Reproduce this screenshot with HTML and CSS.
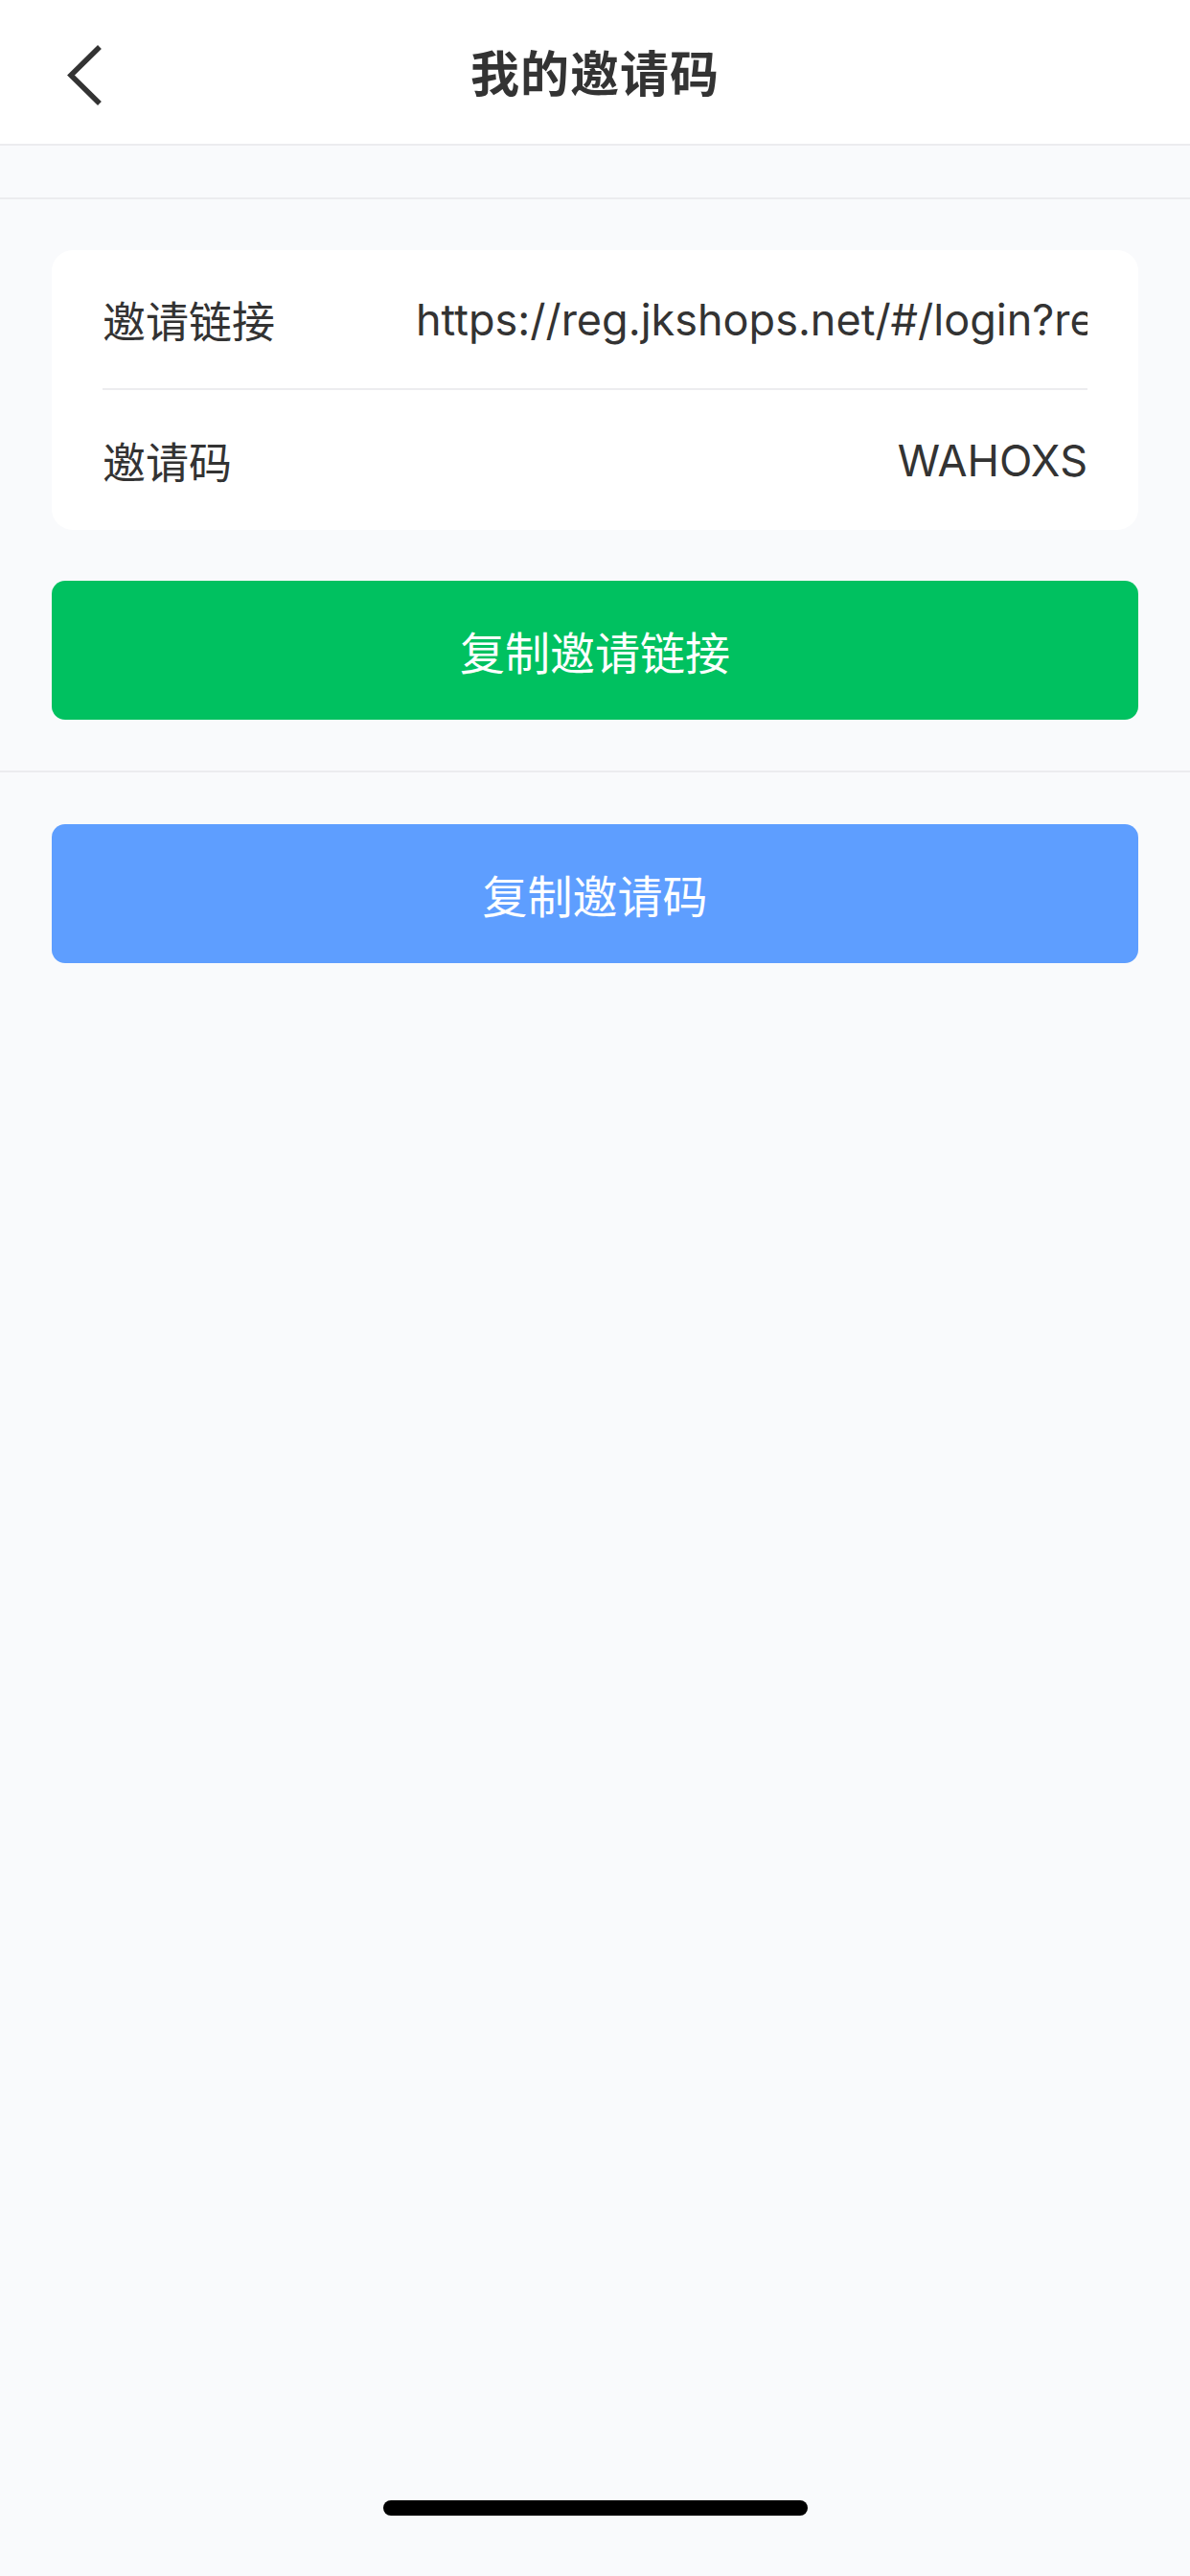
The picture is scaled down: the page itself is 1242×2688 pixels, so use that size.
FILE: index.html
```html
<!DOCTYPE html>
<html lang="zh-CN">
<head>
<meta charset="utf-8">
<title>我的邀请码</title>
<link rel="stylesheet" href="styles.css">
</head>
<body>
<div class="page">
  <header class="navbar">
    <svg class="back" width="60" height="80" viewBox="0 0 60 80">
      <path d="M46 12 L18 39.5 L46 67" fill="none" stroke="#333" stroke-width="5.5" stroke-linecap="square" stroke-linejoin="miter"/>
    </svg>
    <h1 class="title">我的邀请码</h1>
  </header>
  <div class="band"></div>
  <section class="section section-top">
    <div class="card">
      <div class="row row-first">
        <span class="label">邀请链接</span>
        <span class="value link">https://reg.jkshops.net/#/login?ref=WAHOXS</span>
      </div>
      <div class="row row-second">
        <span class="label">邀请码</span>
        <span class="value code">WAHOXS</span>
      </div>
    </div>
    <button class="btn btn-green">复制邀请链接</button>
  </section>
  <section class="section section-bottom">
    <button class="btn btn-blue">复制邀请码</button>
  </section>
  <div class="spacer"></div>
  <div class="home-bar"><span class="indicator"></span></div>
</div>
</body>
</html>
```

FILE: styles.css
```css
* { box-sizing: border-box; margin: 0; padding: 0; }
html, body { width: 1242px; height: 2688px; }
body {
  background: #f9fafc;
  font-family: "Inter", "Noto Sans CJK SC", sans-serif;
  color: #333;
}
.page {
  display: flex;
  flex-direction: column;
  height: 2688px;
}
.navbar {
  height: 152px;
  background: #fff;
  border-bottom: 2px solid #ececef;
  display: flex;
  align-items: center;
  justify-content: center;
  position: relative;
}
.back {
  position: absolute;
  left: 56px;
  top: 39px;
}
.title {
  font-family: "Noto Sans CJK SC", sans-serif;
  font-weight: 700;
  font-size: 51px;
  color: #333;
  letter-spacing: 1px;
  margin-top: -2px;
}
.band {
  height: 56px;
  border-bottom: 2px solid #ececef;
}
.section {
  padding: 53px 54px 53px;
  display: flex;
  flex-direction: column;
  gap: 53px;
}
.section-top { border-bottom: 2px solid #ececef; }
.section-bottom { padding-top: 54px; }
.card {
  background: #fff;
  border-radius: 22px;
  padding: 0 53px;
}
.row {
  display: flex;
  align-items: center;
  font-size: 45px;
}
.row-first { height: 144px; }
.row-second { height: 148px; border-top: 2px solid #ececef; }
.label {
  font-family: "Noto Sans CJK SC", sans-serif;
  width: 327px;
  flex: none;
  color: #333;
}
.value {
  flex: 1;
  min-width: 0;
  overflow: hidden;
  white-space: nowrap;
  color: #333;
}
.code { text-align: right; }
.btn {
  height: 145px;
  border: none;
  border-radius: 14px;
  color: #fff;
  font-family: "Noto Sans CJK SC", sans-serif;
  font-size: 47px;
  display: flex;
  align-items: center;
  justify-content: center;
  width: 100%;
}
.btn-green { background: #00c160; }
.btn-blue { background: #5e9eff; }
.spacer { flex: 1; }
.home-bar {
  height: 96px;
  display: flex;
  justify-content: center;
  padding-top: 17px;
}
.indicator {
  width: 443px;
  height: 16px;
  border-radius: 8px;
  background: #000;
}
```
